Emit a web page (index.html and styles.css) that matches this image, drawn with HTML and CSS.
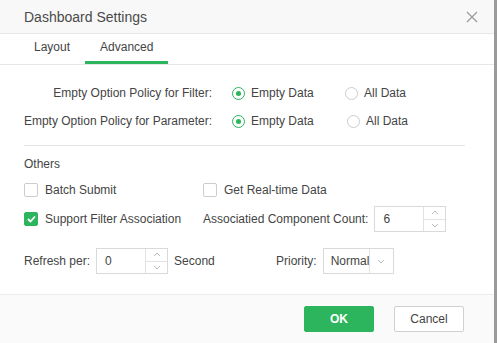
FILE: index.html
```html
<!DOCTYPE html>
<html>
<head>
<meta charset="utf-8">
<link rel="stylesheet" href="styles.css">
</head>
<body>
<div class="page">
  <div class="dialog">
    <div class="header">
      <span class="title">Dashboard Settings</span>
      <svg class="close" width="12" height="12" viewBox="0 0 12 12"><path d="M1 1L11 11M11 1L1 11" stroke="#999" stroke-width="1.2" fill="none"/></svg>
    </div>
    <div class="tabs">
      <div class="tab">Layout</div>
      <div class="tab active">Advanced</div>
    </div>
    <div class="content">
      <div class="policy">
        <div class="prow">
          <div class="plabel">Empty Option Policy for Filter:</div>
          <div class="opt w1"><span class="radio on"></span>Empty Data</div>
          <div class="opt"><span class="radio"></span>All Data</div>
        </div>
        <div class="prow">
          <div class="plabel">Empty Option Policy for Parameter:</div>
          <div class="opt w2"><span class="radio on"></span>Empty Data</div>
          <div class="opt"><span class="radio"></span>All Data</div>
        </div>
      </div>
      <div class="divider"></div>
      <div class="section">Others</div>
      <div class="grid">
        <div class="cell"><span class="check"></span>Batch Submit</div>
        <div class="cell"><span class="check"></span>Get Real-time Data</div>
        <div class="cell tall"><span class="check on"><svg width="9" height="8" viewBox="0 0 9 8"><path d="M1 4L3.5 6.5L8 1.5" stroke="#fff" stroke-width="1.8" fill="none"/></svg></span>Support Filter Association</div>
        <div class="cell tall">Associatied Component Count:
          <div class="spin count"><span class="val">6</span><span class="arrows"><span class="up"><svg width="8" height="5" viewBox="0 0 8 5"><path d="M1 4L4 1L7 4" stroke="#bbb" fill="none"/></svg></span><span class="down"><svg width="8" height="5" viewBox="0 0 8 5"><path d="M1 1L4 4L7 1" stroke="#bbb" fill="none"/></svg></span></span></div>
        </div>
      </div>
      <div class="lastrow">
        <div class="refresh">Refresh per:
          <div class="spin"><span class="val">0</span><span class="arrows"><span class="up"><svg width="8" height="5" viewBox="0 0 8 5"><path d="M1 4L4 1L7 4" stroke="#bbb" fill="none"/></svg></span><span class="down"><svg width="8" height="5" viewBox="0 0 8 5"><path d="M1 1L4 4L7 1" stroke="#bbb" fill="none"/></svg></span></span></div>
          <span class="unit">Second</span>
        </div>
        <div class="priority">Priority:
          <div class="select"><span class="sval">Normal</span><span class="sarrow"><svg width="8" height="5" viewBox="0 0 8 5"><path d="M1 1L4 4L7 1" stroke="#bbb" fill="none"/></svg></span></div>
        </div>
      </div>
    </div>
    <div class="footer">
      <button class="btn ok">OK</button>
      <button class="btn cancel">Cancel</button>
    </div>
  </div>
  <div class="backdrop"></div>
</div>
</body>
</html>
```
FILE: styles.css
```css
html, body { margin: 0; padding: 0; }
body { font-family: "Liberation Sans", Arial, sans-serif; font-size: 12px; color: #444; background: #9a9a9a; }
.page { display: flex; height: 343px; width: 497px; overflow: hidden; }
.dialog { width: 494px; height: 343px; background: #fff; display: flex; flex-direction: column; flex: none; }
.backdrop { flex: 1; background: #9a9a9a; }
.header { height: 34px; box-sizing: border-box; background: #f8f8f8; border-bottom: 1px solid #e8e8e8; display: flex; align-items: center; justify-content: space-between; padding: 0 16px 0 24px; }
.title { font-size: 14px; color: #4a4a4a; }
.close { display: block; }
.tabs { height: 31px; box-sizing: border-box; border-bottom: 1px solid #e6e6e6; display: flex; padding-left: 25px; }
.tab { padding: 0 9px; margin-right: 6px; line-height: 27px; color: #444; border-bottom: 3px solid transparent; }
.tab.active { padding: 0 15px; border-bottom-color: #2cb55c; }
.content { flex: 1; padding: 18px 29px 0 24px; }
.policy { display: flex; flex-direction: column; gap: 8px; }
.prow { display: flex; align-items: center; height: 20px; }
.plabel { width: 188px; flex: none; display: flex; justify-content: flex-end; white-space: nowrap; margin-right: 20px; }
.opt { display: flex; align-items: center; }
.opt.w1 { width: 113px; }
.opt.w2 { width: 115px; }
.radio { width: 11px; height: 11px; border: 1px solid #ccc; border-radius: 50%; margin-right: 6px; display: flex; align-items: center; justify-content: center; box-sizing: content-box; }
.radio.on { border-color: #2cb55c; }
.radio.on::after { content: ""; width: 5px; height: 5px; border-radius: 50%; background: #2cb55c; }
.divider { height: 1px; background: #e4e4e4; margin: 14px 0 0 0; }
.section { margin-top: 11px; line-height: 14px; }
.grid { display: grid; grid-template-columns: 179px auto; row-gap: 6px; margin-top: 9px; }
.cell { display: flex; align-items: center; height: 20px; }
.cell.tall { height: 26px; }
.check { width: 12px; height: 12px; border: 1px solid #ccc; border-radius: 2px; margin-right: 7px; display: flex; align-items: center; justify-content: center; box-sizing: content-box; }
.check.on { background: #2cb55c; border-color: #2cb55c; }
.check svg { display: block; }
.spin { display: flex; width: 72px; height: 26px; box-sizing: border-box; border: 1px solid #d9d9d9; margin-left: 6px; }
.spin .val { flex: 1; line-height: 24px; padding-left: 8px; }
.arrows { width: 21px; border-left: 1px solid #e2e2e2; display: flex; flex-direction: column; }
.arrows span { flex: 1; display: flex; align-items: center; justify-content: center; }
.arrows .up { border-bottom: 1px solid #e2e2e2; }
.arrows svg { display: block; }
.lastrow { display: flex; align-items: center; margin-top: 16px; }
.refresh { display: flex; align-items: center; width: 252px; }
.unit { margin-left: 6px; }
.priority { display: flex; align-items: center; }
.select { display: flex; width: 71px; height: 26px; box-sizing: border-box; border: 1px solid #d9d9d9; margin-left: 6px; }
.sval { width: 45px; overflow: hidden; white-space: nowrap; line-height: 24px; padding-left: 7px; box-sizing: border-box; }
.sarrow { flex: 1; border-left: 1px solid #e2e2e2; display: flex; align-items: center; justify-content: center; }
.sarrow svg { display: block; }
.footer { height: 49px; box-sizing: border-box; background: #fafafa; border-top: 1px solid #ececec; display: flex; align-items: center; justify-content: flex-end; padding: 0 30px 0 0; gap: 20px; }
.btn { width: 70px; height: 26px; font-family: "Liberation Sans", Arial, sans-serif; font-size: 12px; border-radius: 2px; cursor: pointer; }
.ok { background: #2cb55c; color: #fff; border: 1px solid #2cb55c; font-weight: bold; }
.cancel { background: #fff; color: #444; border: 1px solid #d0d0d0; }
```
